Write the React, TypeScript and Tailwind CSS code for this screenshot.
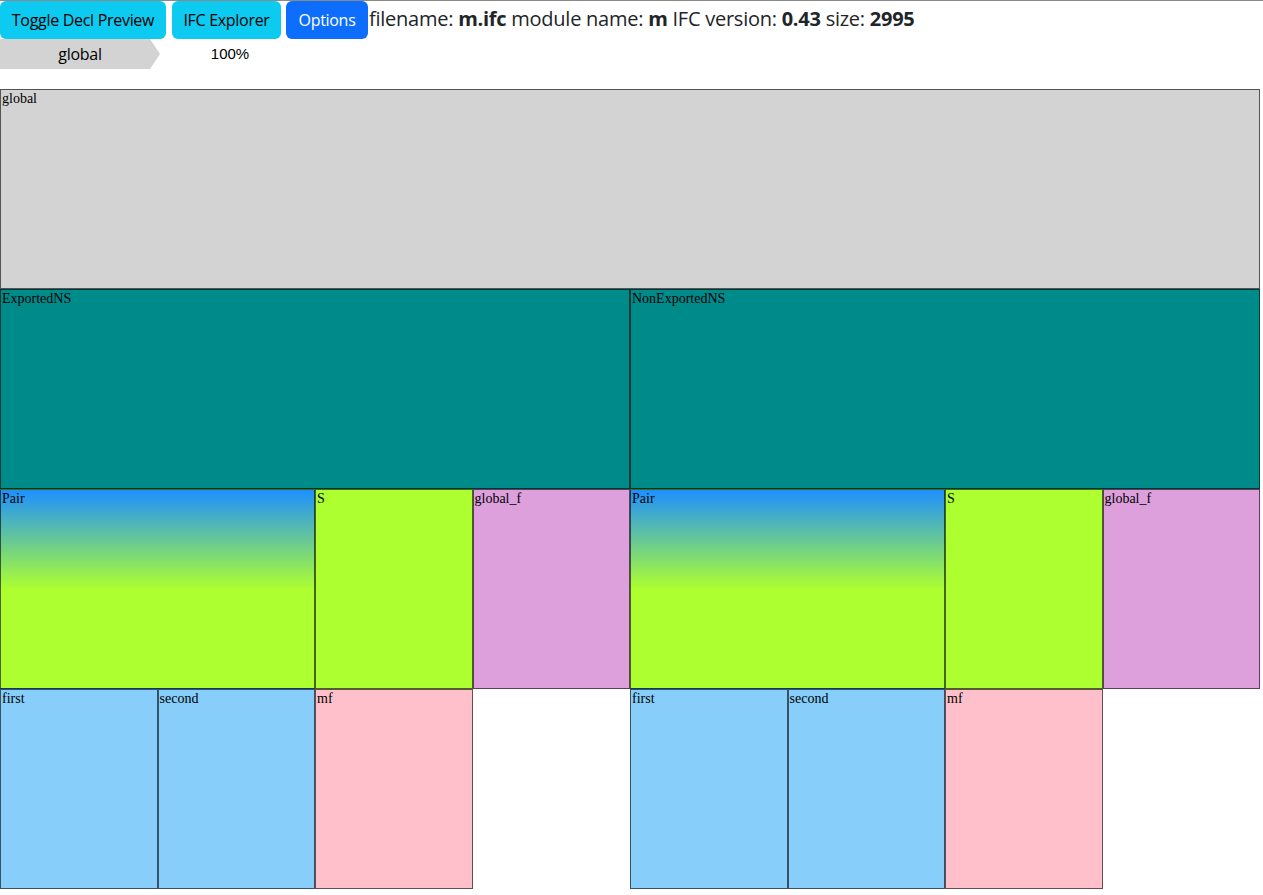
import React from 'react'

type Decl = {
  name: string
  bg: string
  w: string
  kids?: Decl[]
}

const pairBg = 'bg-[linear-gradient(to_bottom,#1e90ff_0%,#adff2f_50%)]'

function ns(name: string): Decl {
  return {
    name,
    bg: 'bg-[#008b8b]',
    w: 'w-1/2',
    kids: [
      {
        name: 'Pair',
        bg: pairBg,
        w: 'w-1/2',
        kids: [
          { name: 'first', bg: 'bg-[#87cefa]', w: 'w-1/2' },
          { name: 'second', bg: 'bg-[#87cefa]', w: 'w-1/2' },
        ],
      },
      {
        name: 'S',
        bg: 'bg-[#adff2f]',
        w: 'w-1/4',
        kids: [{ name: 'mf', bg: 'bg-[#ffc0cb]', w: 'w-full' }],
      },
      { name: 'global_f', bg: 'bg-[#dda0dd]', w: 'w-1/4' },
    ],
  }
}

const tree: Decl = {
  name: 'global',
  bg: 'bg-[#d3d3d3]',
  w: 'w-[1260px]',
  kids: [ns('ExportedNS'), ns('NonExportedNS')],
}

function Node({ d }: { d: Decl }) {
  return (
    <div className={`${d.w} flex flex-col`}>
      <div className={`h-[200px] w-full border border-black/60 ${d.bg} px-px pt-px text-[14px] leading-[15px] text-black`}>
        {d.name}
      </div>
      {d.kids && (
        <div className="flex w-full">
          {d.kids.map((k) => (
            <Node key={k.name} d={k} />
          ))}
        </div>
      )}
    </div>
  )
}

export default function App() {
  return (
    <div className="min-h-[895px] bg-white border-t border-[#8a8a8a] font-['Open_Sans',sans-serif]">
      <div className="flex items-center">
        <button className="h-[38px] w-[166px] rounded-md bg-[#0dcaf0] text-[16px] tracking-[-0.3px] text-black">
          Toggle Decl Preview
        </button>
        <button className="ml-[6px] h-[38px] w-[109px] rounded-md bg-[#0dcaf0] text-[16px] tracking-[-0.3px] text-black">
          IFC Explorer
        </button>
        <button className="ml-[5px] h-[38px] w-[82px] rounded-md bg-[#0d6efd] text-[16px] tracking-[-0.3px] text-white">
          Options
        </button>
        <h5 className="ml-px pb-[3px] text-[20px] font-medium tracking-[-0.25px] text-[#212529]">
          filename: <b>m.ifc</b> module name: <b>m</b> IFC version: <b>0.43</b> size: <b>2995</b>
        </h5>
      </div>
      <div className="flex h-[30px] items-center">
        <div className="flex h-[30px] w-[160px] items-center justify-center bg-[#d3d3d3] text-[16px] tracking-[-0.3px] text-black [clip-path:polygon(0_0,150px_0,160px_15px,150px_30px,0_30px)]">
          global
        </div>
        <div className="w-[140px] text-center font-['Liberation_Sans',sans-serif] text-[15px] text-black">
          100%
        </div>
      </div>
      <div className="mt-[20px] font-['Liberation_Serif',serif]">
        <Node d={tree} />
      </div>
    </div>
  )
}
